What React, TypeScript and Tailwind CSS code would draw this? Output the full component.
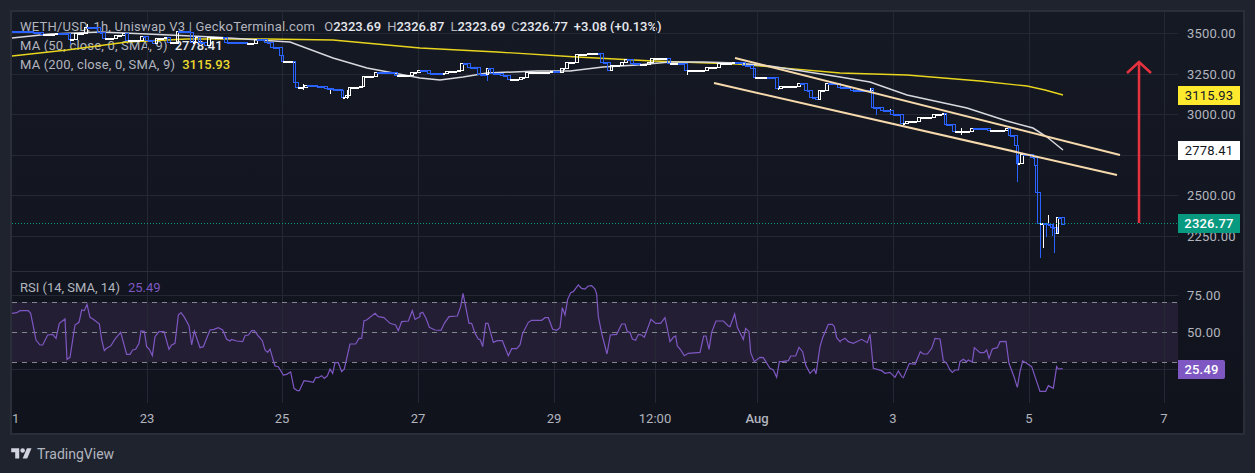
const grid = [147, 282, 418, 554, 655, 757, 893, 1029, 1164];
const priceGrid = [33, 74, 114, 155, 195, 236];

// all chart data is in page pixels, the svg viewBoxes line up with that
const ma200 =
  "12,56 67,50 127,42 187,39 267,39 333,40 420,48 497,52 577,57 653,61 737,64 840,73 907,75 980,81 1027,86 1045,90 1063,95";
const ma50 =
  "12,38 50,34 100,32 147,34 213,37 290,42 333,58 367,68 420,78 440,80 463,77 487,73 537,71 570,71 603,67 637,65 670,62 703,62 737,63 770,66 840,77 870,82 907,95 967,108 1007,121 1033,128 1047,137 1063,150";

const price: [number, number][] = [
  [12, 31], [33, 32], [43, 34], [58, 33], [68, 33], [70, 39], [77, 33], [87, 27], [100, 32], [105, 38], [117, 35],
  [125, 33], [128, 40], [143, 36], [148, 40], [155, 43], [157, 38], [167, 37], [170, 42], [178, 42], [178, 31],
  [190, 32], [193, 42], [198, 37], [200, 42], [207, 45], [210, 37], [223, 37], [227, 42], [247, 43], [257, 39],
  [267, 42], [273, 47], [282, 55], [283, 61], [295, 61], [295, 82], [298, 87], [307, 85], [317, 86], [327, 88],
  [333, 89], [342, 90], [343, 97], [348, 95], [350, 87], [362, 86], [364, 76], [377, 72], [397, 75], [413, 72],
  [420, 70], [427, 70], [430, 73], [443, 73], [448, 71], [460, 70], [463, 63], [470, 67], [480, 74], [487, 74],
  [488, 68], [493, 73], [503, 75], [510, 79], [522, 77], [528, 72], [553, 71], [560, 72], [563, 68], [568, 62],
  [578, 54], [590, 53], [598, 53], [603, 62], [610, 70], [612, 65], [623, 62], [627, 59], [633, 63], [640, 64],
  [650, 62], [653, 58], [667, 58], [670, 63], [678, 63], [687, 70], [703, 70], [708, 67], [715, 67], [720, 63],
  [735, 62], [745, 65], [753, 68], [755, 77], [767, 77], [778, 88], [782, 86], [800, 83], [807, 90], [812, 97],
  [818, 99], [820, 90], [828, 83], [840, 87], [853, 90], [870, 90], [873, 88], [873, 107], [883, 110], [893, 114],
  [903, 123], [908, 121], [920, 117], [935, 114], [945, 113], [946, 124], [955, 131], [973, 128], [990, 130],
  [1008, 128], [1010, 135], [1017, 145], [1018, 163], [1023, 154], [1033, 157], [1037, 165], [1037, 192],
  [1040, 223], [1043, 223], [1048, 224], [1053, 227], [1057, 233], [1058, 217], [1064, 224],
];

const wicks: [number, number, number, boolean][] = [
  [70, 39, 44, false], [87, 24, 30, true], [1017, 155, 182, false], [1040, 192, 258, false], [1043, 223, 248, true],
  [1048, 215, 224, true], [1046, 224, 237, false], [1054, 227, 253, false], [876, 107, 115, false], [890, 109, 115, true],
  [903, 123, 127, false], [961, 128, 135, true], [1037, 190, 202, false], [1052, 224, 236, false], [487, 74, 81, false],
  [687, 70, 75, true], [343, 90, 98, true], [303, 84, 90, true], [330, 88, 94, true], [347, 90, 99, true],
];

const rsiA =
  "35,130 50,128 60,122 85,122 92,130 100,170 108,210 120,225 128,225 143,195 158,193 168,205 178,160 195,147 201,268 210,262 225,165 237,157 245,120 253,122 261,103 270,142 280,148 298,162 305,210 313,242 320,235 333,227 345,207 362,187 380,253 390,253 398,240 407,238 417,220 423,183 433,184 440,230 448,238 457,257 465,200 477,185 492,185 507,238 515,225 525,220 535,135 543,128 552,140 567,167 575,225 583,183 600,233 610,230 630,180 642,178 655,173 668,180 680,208 690,213 695,208 710,213 728,215 735,197 745,195 755,182 763,182 775,198 787,212 795,240 803,247 810,237 825,288 835,290 850,315 860,313 872,306 882,355 892,362 898,362 912,332 930,335 940,337 947,322 955,323 965,317 973,325 982,318 990,297 998,310 1005,278 1015,278 1025,305 1033,297 1050,222 1067,222 1077,205 1085,205 1092,152 1100,150 1125,130 1135,140 1152,143 1170,160 1187,165 1195,182 1205,155 1225,153 1237,122 1245,148 1260,140";
const rsiB =
  "0,130 8,127 18,145 28,172 45,180 63,181 73,160 87,140 112,138 122,110 129,70 147,160 155,160 165,190 175,207 181,210 188,230 197,160 204,160 220,217 232,212 247,212 265,257 275,236 290,236 300,225 308,190 325,157 335,151 365,151 375,143 385,143 398,178 410,181 420,173 427,113 435,135 443,88 452,68 460,65 475,45 485,55 495,57 505,48 515,47 525,57 530,72 535,140 545,190 561,252 571,195 590,193 605,162 615,162 622,185 630,187 637,207 647,211 655,193 665,195 673,202 693,148 707,160 722,160 735,143 750,215 760,202 767,198 772,228 780,237 793,257 805,250 840,247 851,198 858,198 867,238 875,187 888,153 910,153 925,168 930,170 944,132 952,172 970,208 977,175 987,185 992,248 1003,275 1020,262 1030,263 1050,295 1060,300 1070,322 1078,275 1085,275 1105,272 1112,258 1127,258 1137,232 1148,245 1157,285 1170,310 1183,297 1188,312 1200,230 1208,203 1225,163 1237,163 1243,170 1250,203 1260,215";
const rsiC =
  "0,213 15,205 25,215 40,220 65,208 82,218 90,193 100,295 125,302 135,310 150,307 165,322 175,303 185,320 190,323 208,280 225,283 241,245 250,252 262,252 275,235 285,205 300,207 310,272 320,280 330,300 337,307 345,300 355,300 360,275 370,268 380,275 385,270 397,276 403,233 420,248 432,248 440,240 447,265 457,237 472,233 480,215 498,214 507,280 522,320 532,352 540,305 548,273 560,280 575,290 600,364 617,364 625,347 640,355 650,290 655,297 668,296";

const fromZoom = (raw: string, ox: number) =>
  raw
    .split(" ")
    .map((p) => {
      const [x, y] = p.split(",").map(Number);
      return `${ox + x / 3},${270 + y / 3}`;
    })
    .join(" ");

const rsiLine = [fromZoom(rsiA, 0), fromZoom(rsiB, 420), fromZoom(rsiC, 840)].join(" ");

function Candles() {
  return (
    <g shapeRendering="crispEdges" fill="none">
      {wicks.map(([x, top, bottom, up], i) => (
        <line key={i} x1={x + 0.5} x2={x + 0.5} y1={top} y2={bottom} stroke={up ? "#ffffff" : "#2962ff"} />
      ))}
      {price.slice(1).map(([x, y], i) => {
        const [px, py] = price[i];
        const up = y < py || (y === py && i % 2 === 0);
        const color = up ? "#ffffff" : "#2962ff";
        const w = Math.max(Math.min(x - px, 3), 2);
        return (
          <g key={i} stroke={color}>
            {x - w > px && <line x1={px} x2={x - w} y1={py + 1} y2={py + 1} strokeWidth="2" />}
            <rect x={x - w + 0.5} y={Math.min(py, y) + 0.5} width={w} height={Math.max(Math.abs(y - py), 1)} />
          </g>
        );
      })}
    </g>
  );
}

function MainChart() {
  return (
    <svg viewBox="12 12 1166 259" className="absolute inset-0 z-10 h-full w-full">
      <g stroke="#242835" shapeRendering="crispEdges">
        {grid.map((x) => (
          <line key={x} x1={x + 0.5} x2={x + 0.5} y1={12} y2={271} />
        ))}
        {priceGrid.map((y) => (
          <line key={y} x1={12} x2={1178} y1={y + 0.5} y2={y + 0.5} />
        ))}
      </g>
      <polyline points={ma200} fill="none" stroke="#e8d51e" strokeWidth="1.3" />
      <polyline points={ma50} fill="none" stroke="#d8d9de" strokeWidth="1.5" />
      <Candles />
      <line x1={12} x2={1178} y1={223.5} y2={223.5} stroke="#089981" strokeDasharray="1 2" />
      <line x1={735} y1={58} x2={1120} y2={155} stroke="#f6d9ac" strokeWidth="2" />
      <line x1={714} y1={83} x2={1117} y2={175} stroke="#f6d9ac" strokeWidth="2" />
      <path d="M1139 223V62M1127 73L1139 62L1151 73" fill="none" stroke="#e5323f" strokeWidth="2.5" />
    </svg>
  );
}

function RsiChart() {
  return (
    <svg viewBox="12 272 1166 131" className="absolute inset-0 h-full w-full">
      <rect x={12} y={302} width={1166} height={60} fill="#231e33" />
      <g stroke="#242835" shapeRendering="crispEdges">
        {grid.map((x) => (
          <line key={x} x1={x + 0.5} x2={x + 0.5} y1={272} y2={403} />
        ))}
        {[295, 332, 369].map((y) => (
          <line key={y} x1={12} x2={1178} y1={y + 0.5} y2={y + 0.5} />
        ))}
      </g>
      <g stroke="#84868f" strokeDasharray="5 5" shapeRendering="crispEdges">
        {[302, 332, 362].map((y) => (
          <line key={y} x1={12} x2={1178} y1={y + 0.5} y2={y + 0.5} />
        ))}
      </g>
      <polyline points={rsiLine} fill="none" stroke="#7e57c2" strokeWidth="1.2" />
    </svg>
  );
}

function Tag({ className, text }: { className: string; text: string }) {
  return (
    <div className={`absolute left-0 flex h-[19px] items-center justify-center tracking-[0.2px] ${className}`}>
      {text}
    </div>
  );
}

export default function App() {
  return (
    <div className="h-[473px] w-[1255px] overflow-hidden bg-[#1f232e] pl-[10px] pt-[10px] font-['Roboto',sans-serif] text-[13px] text-[#b2b5be]">
      <div className="flex h-[425px] w-[1235px] flex-col border-2 border-[#2a2e39] bg-linear-to-b from-[#151924] to-[#10131c]">
        <div className="flex h-[259px]">
          <div className="relative flex-1 overflow-hidden">
            <div className="absolute left-2 top-[6px] flex flex-col gap-[1px] leading-[18px]">
              <div className="flex gap-[6px] whitespace-nowrap">
                <span className="mr-[3px] tracking-[0.22px]">WETH/USD, 1h, Uniswap V3 | GeckoTerminal.com</span>
                <span>
                  O<span className="font-medium text-[#e6e8ee]">2323.69</span>
                </span>
                <span>
                  H<span className="font-medium text-[#e6e8ee]">2326.87</span>
                </span>
                <span>
                  L<span className="font-medium text-[#e6e8ee]">2323.69</span>
                </span>
                <span>
                  C<span className="font-medium text-[#e6e8ee]">2326.77</span>
                </span>
                <span className="font-medium text-[#e6e8ee]">+3.08 (+0.13%)</span>
              </div>
              <div className="flex gap-[7px] whitespace-nowrap">
                <span className="tracking-[0.18px]">MA (50, close, 0, SMA, 9)</span>
                <span className="font-medium text-[#e6e8ee]">2778.41</span>
              </div>
              <div className="flex gap-[7px] whitespace-nowrap">
                <span className="tracking-[0.18px]">MA (200, close, 0, SMA, 9)</span>
                <span className="font-medium text-[#ecd92e]">3115.93</span>
              </div>
            </div>
            <MainChart />
          </div>
          <div className="relative flex w-[65px] flex-col justify-between pb-[26px] pl-[9px] pt-[14px] leading-4 tracking-[0.2px]">
            <span>3500.00</span>
            <span>3250.00</span>
            <span>3000.00</span>
            <span className="invisible">2750.00</span>
            <span>2500.00</span>
            <span>2250.00</span>
            <Tag className="top-[74px] w-[62px] bg-[#ffe92f] text-[#131722]" text="3115.93" />
            <Tag className="top-[129px] w-[62px] bg-white text-[#131722]" text="2778.41" />
            <Tag className="top-[202px] w-[62px] bg-[#089981] font-medium text-white" text="2326.77" />
          </div>
        </div>
        <div className="flex h-[132px] border-t border-[#2a2e39]">
          <div className="relative flex-1 overflow-hidden">
            <RsiChart />
            <div className="absolute left-2 top-[7px] flex gap-[8px] whitespace-nowrap leading-[18px]">
              <span>RSI (14, SMA, 14)</span>
              <span className="text-[#7e57c2]">25.49</span>
            </div>
          </div>
          <div className="relative flex w-[65px] flex-col gap-[21px] pl-[9px] pt-[16px] leading-4 tracking-[0.2px]">
            <span>75.00</span>
            <span>50.00</span>
            <Tag className="top-[88px] w-[47px] rounded-r-[2px] bg-[#7e57c2] font-medium text-white" text="25.49" />
          </div>
        </div>
        <div className="flex h-[30px] items-center pt-px text-center leading-4">
          <span className="w-[115px] text-left">1</span>
          <span className="w-10">23</span>
          <span className="ml-[95px] w-10">25</span>
          <span className="ml-[96px] w-10">27</span>
          <span className="ml-[96px] w-10">29</span>
          <span className="ml-[61px] w-10">12:00</span>
          <span className="ml-[62px] w-10 font-medium">Aug</span>
          <span className="ml-[96px] w-10">3</span>
          <span className="ml-[96px] w-10">5</span>
          <span className="ml-[95px] w-10">7</span>
        </div>
      </div>
      <div className="ml-px mt-[9px] flex items-center gap-[5px] text-[14px] leading-5 text-[#b2b5be]">
        <svg viewBox="0 0 36 28" className="h-[16px] w-[21px]" fill="#d1d4dc">
          <path d="M14 22H7V11H0V4h14v18zM28 22h-8l7.5-18h8L28 22z" />
          <circle cx="20" cy="8" r="4" />
        </svg>
        <span>TradingView</span>
      </div>
    </div>
  );
}
